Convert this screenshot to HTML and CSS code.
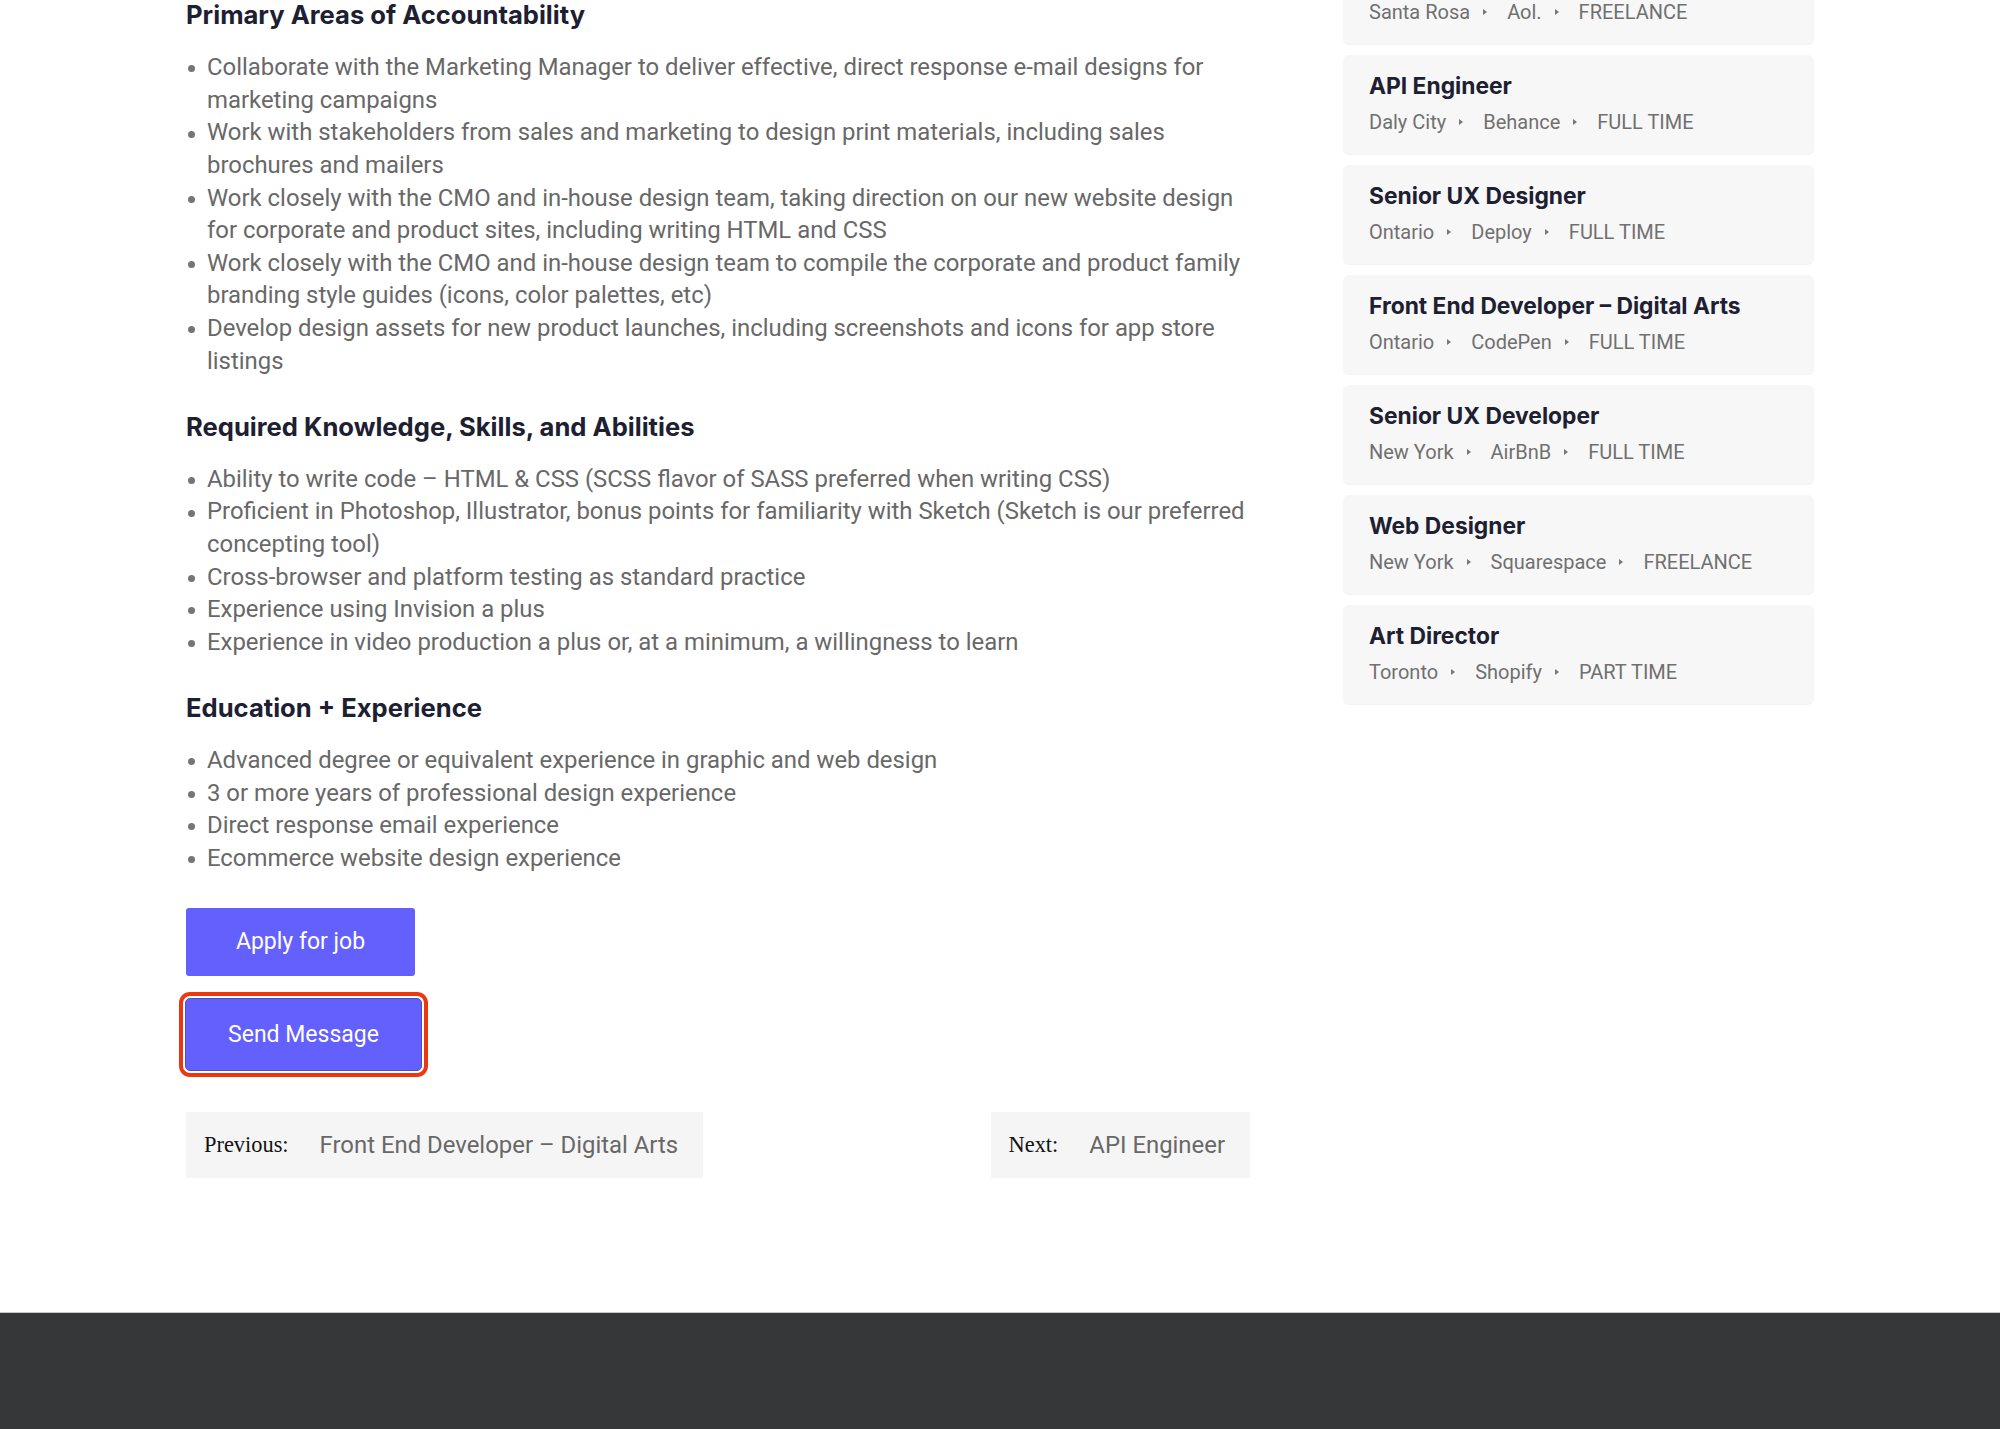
FILE: index.html
```html
<!DOCTYPE html>
<html lang="en">
<head>
    <meta charset="UTF-8">
    <meta name="viewport" content="width=device-width, initial-scale=1.0">
    <title>Job details</title>
    <link rel="stylesheet" href="styles.css">
</head>
<body>

    <div class="page">
        <!-- Job description -->
        <main class="job-content">
            <h3 class="section-title">Primary Areas of Accountability</h3>
            <ul class="job-list">
                <li>Collaborate with the Marketing Manager to deliver effective, direct response e-mail designs for marketing campaigns</li>
                <li>Work with stakeholders from sales and marketing to design print materials, including sales brochures and mailers</li>
                <li>Work closely with the CMO and in-house design team, taking direction on our new website design for corporate and product sites, including writing HTML and CSS</li>
                <li>Work closely with the CMO and in-house design team to compile the corporate and product family branding style guides (icons, color palettes, etc)</li>
                <li>Develop design assets for new product launches, including screenshots and icons for app store listings</li>
            </ul>

            <h3 class="section-title">Required Knowledge, Skills, and Abilities</h3>
            <ul class="job-list">
                <li>Ability to write code – HTML &amp; CSS (SCSS flavor of SASS preferred when writing CSS)</li>
                <li>Proficient in Photoshop, Illustrator, bonus points for familiarity with Sketch (Sketch is our preferred concepting tool)</li>
                <li>Cross-browser and platform testing as standard practice</li>
                <li>Experience using Invision a plus</li>
                <li>Experience in video production a plus or, at a minimum, a willingness to learn</li>
            </ul>

            <h3 class="section-title">Education + Experience</h3>
            <ul class="job-list">
                <li>Advanced degree or equivalent experience in graphic and web design</li>
                <li>3 or more years of professional design experience</li>
                <li>Direct response email experience</li>
                <li>Ecommerce website design experience</li>
            </ul>

            <div class="job-actions">
                <a href="#" class="btn btn-apply">Apply for job</a>
                <button type="button" class="btn btn-message is-focused">Send Message</button>
            </div>

            <nav class="post-nav">
                <div class="post-nav-item">
                    <span class="post-nav-label">Previous:</span>
                    <a href="#" class="post-nav-link">Front End Developer – Digital Arts</a>
                </div>
                <div class="post-nav-item">
                    <span class="post-nav-label">Next:</span>
                    <a href="#" class="post-nav-link">API Engineer</a>
                </div>
            </nav>
        </main>

        <!-- Other openings -->
        <aside class="sidebar">
            <div class="job-card">
                <div class="job-card-title">Product Designer</div>
                <div class="job-card-meta"><span>Santa Rosa</span><span>Aol.</span><span>FREELANCE</span></div>
            </div>
            <div class="job-card">
                <div class="job-card-title">API Engineer</div>
                <div class="job-card-meta"><span>Daly City</span><span>Behance</span><span>FULL TIME</span></div>
            </div>
            <div class="job-card">
                <div class="job-card-title">Senior UX Designer</div>
                <div class="job-card-meta"><span>Ontario</span><span>Deploy</span><span>FULL TIME</span></div>
            </div>
            <div class="job-card">
                <div class="job-card-title">Front End Developer – Digital Arts</div>
                <div class="job-card-meta"><span>Ontario</span><span>CodePen</span><span>FULL TIME</span></div>
            </div>
            <div class="job-card">
                <div class="job-card-title">Senior UX Developer</div>
                <div class="job-card-meta"><span>New York</span><span>AirBnB</span><span>FULL TIME</span></div>
            </div>
            <div class="job-card">
                <div class="job-card-title">Web Designer</div>
                <div class="job-card-meta"><span>New York</span><span>Squarespace</span><span>FREELANCE</span></div>
            </div>
            <div class="job-card">
                <div class="job-card-title">Art Director</div>
                <div class="job-card-meta"><span>Toronto</span><span>Shopify</span><span>PART TIME</span></div>
            </div>
        </aside>
    </div>

    <footer class="site-footer"></footer>

</body>
</html>
```

FILE: styles.css
```css
body {
    margin: 0;
    background: #fff;
    color: #686868;
    font-family: Roboto, "Noto Sans", sans-serif;
    font-size: 23.9px;
    line-height: 32.6px;
}

.page {
    display: grid;
    grid-template-columns: 1072px 471px;
    column-gap: 85px;
    width: 1628px;
    margin: 0 auto;
    align-items: start;
}

/* Job description column */
.section-title {
    margin: 35px 0 20px;
    color: #1d2031;
    font-family: Inter, "Noto Sans", sans-serif;
    font-size: 25.6px;
    font-weight: 700;
    line-height: 30.7px;
}

.section-title:first-child {
    margin-top: 0;
    margin-bottom: 20.5px;
}

.job-list {
    list-style: none;
    margin: 0;
    padding: 0 0 0 21px;
}

/* round bullet, centred on the x-height */
.job-list li::before {
    content: "";
    display: inline-block;
    width: 7px;
    height: 7px;
    margin: 0 12.5px 0 -19.5px;
    border-radius: 50%;
    background: #757575;
    vertical-align: middle;
}

.job-actions {
    display: flex;
    flex-direction: column;
    align-items: flex-start;
    gap: 22px;
    margin-top: 34px;
}

.btn {
    display: inline-flex;
    align-items: center;
    justify-content: center;
    box-sizing: border-box;
    background: #6360fe;
    color: #fff;
    font-family: Roboto, sans-serif;
    font-size: 23px;
    text-decoration: none;
    border-radius: 3px;
}

.btn-apply {
    width: 229px;
    height: 68px;
}

.btn-message {
    width: 237px;
    height: 73px;
    margin-left: -1px;
    border: 1px solid #4f4fb8;
    border-radius: 4px;
    cursor: pointer;
}

/* focus ring seen on the send button */
.btn-message.is-focused {
    box-shadow: 0 0 0 2px #fff, 0 0 0 6px #ea3810;
    border-radius: 5px;
}

.post-nav {
    display: flex;
    justify-content: space-between;
    margin: 41px 8px 0 0;
}

.post-nav-item {
    display: flex;
    align-items: center;
    height: 66px;
    padding: 0 25px 0 18px;
    background: #f5f5f5;
}

.post-nav-label {
    color: #111;
    font-family: "Liberation Serif", serif;
    font-size: 22.4px;
}

.post-nav-link {
    margin-left: 31px;
    color: #686868;
    text-decoration: none;
}

/* Sidebar list of openings */
.sidebar {
    display: flex;
    flex-direction: column;
    gap: 11px;
    margin-top: -55px;
}

.job-card {
    height: 99px;
    box-sizing: border-box;
    padding: 17px 25px 0 26px;
    background: #f7f7f7;
    border-radius: 6px;
    box-shadow: 0 1px 1px rgba(0, 0, 0, 0.05);
}

.job-card-title {
    color: #1d2031;
    font-family: Inter, sans-serif;
    font-size: 22.8px;
    font-weight: 700;
    line-height: 28px;
}

.job-card-meta {
    display: flex;
    align-items: center;
    margin-top: 11px;
    color: #707070;
    font-size: 20px;
    line-height: 23px;
}

.job-card-meta span + span::before {
    content: "";
    display: inline-block;
    vertical-align: middle;
    margin: -3px 20px 0 13px;
    border-left: 4px solid #777;
    border-top: 3px solid transparent;
    border-bottom: 3px solid transparent;
}

.site-footer {
    height: 200px;
    margin-top: 134px;
    background: #363739;
    border-top: 1px solid #c9c9c9;
}
```
